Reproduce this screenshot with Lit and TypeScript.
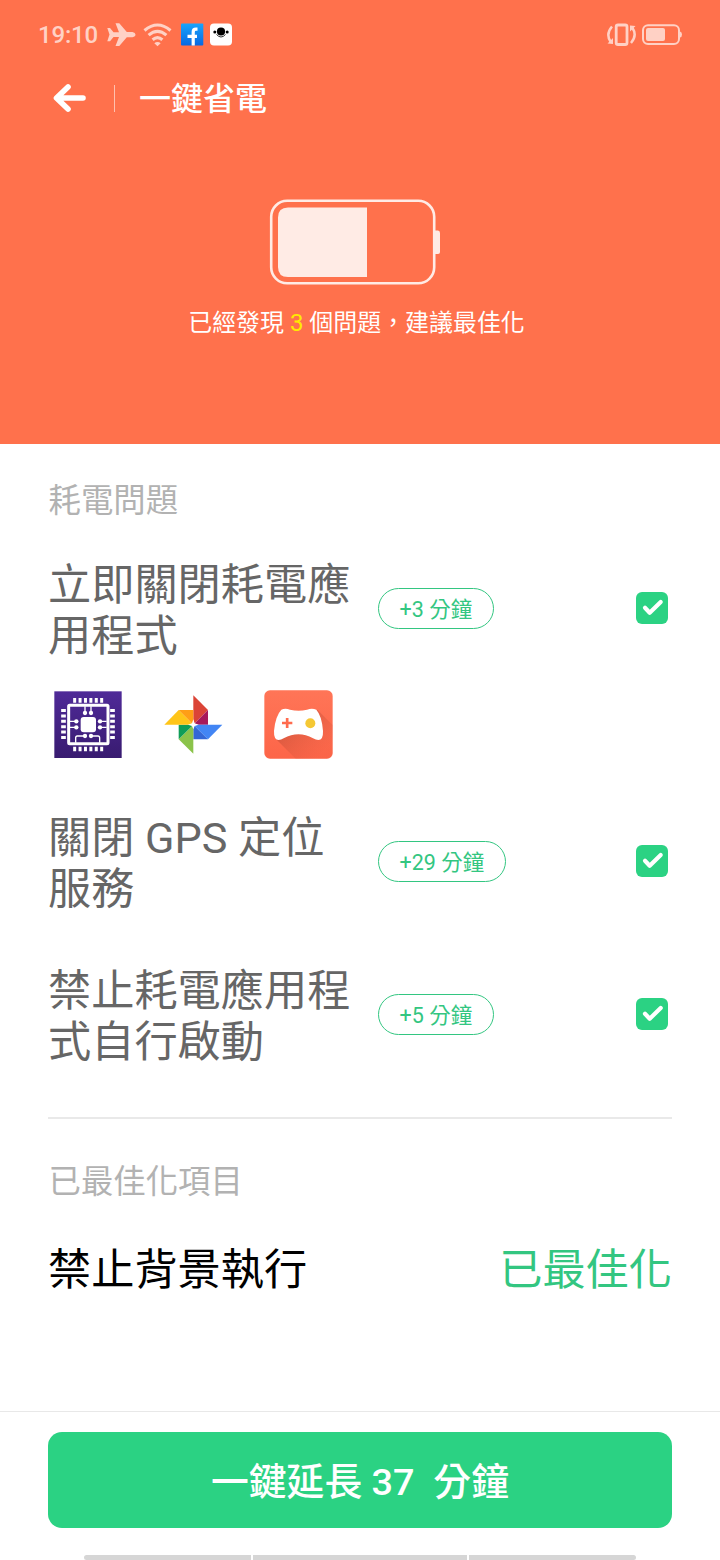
import { LitElement, html, css, svg } from "lit";
import { customElement, property, state } from "lit/decorators.js";

const processor = html`<svg viewBox="42 30 207 207" aria-hidden="true">
  <defs><linearGradient id="cpu" x1="0" y1="0" x2="0" y2="1"><stop offset="0" stop-color="#4f2a98" /><stop offset="1" stop-color="#381b70" /></linearGradient></defs>
  <rect x="43" y="34" width="202" height="200" fill="url(#cpu)" />
  <g stroke="#fff" fill="none">
    <rect x="86" y="76" width="118" height="115" rx="3" stroke-width="9" />
    <path stroke-width="14" stroke-dasharray="9 7.2" d="M99.500 61H190M99.500 207H190M70.500 87V178M217.500 87V178" />
    <path stroke-width="4" d="M135 79V98M153 79V98M90 124H110M90 142H110M180 124H200M180 142H200M135 168H112Q107 168 107 174V188M153 168H174Q179 168 179 174V188" />
  </g>
  <g fill="#fff">
    <rect x="122" y="111" width="46" height="46" rx="9" />
    ${[[135, 99], [153, 99], [109, 124], [109, 142], [180, 124], [180, 142], [135, 168], [153, 168]].map(
      ([x, y]) => svg`<circle cx=${x} cy=${y} r="6.5" />`
    )}
  </g>
</svg>`;

const pinwheel = html`<svg viewBox="357 30 207 207" aria-hidden="true">
  <path fill="#db4437" d="M460 46L504 90L460 134Z" />
  <path fill="#a7195b" d="M504 90V134H460Z" />
  <path fill="#4285f4" d="M460 134H547L504 178Z" />
  <path fill="#3367d6" d="M460 134L504 178H460Z" />
  <path fill="#8bc34a" d="M460 134V221L416 178Z" />
  <path fill="#0f9d58" d="M416 134H460L416 178Z" />
  <path fill="#ffc518" d="M373 134L416 90L460 134Z" />
  <path fill="#ff9e16" d="M416 90H460V134Z" />
  <path fill="#fff" d="M460 118L464 130L476 134L464 138L460 148L456 138L444 134L456 130Z" />
</svg>`;

const gamepad = html`<svg viewBox="672 30 207 207" aria-hidden="true">
  <defs>
    <linearGradient id="pad" x1="0" y1="0" x2="0" y2="1"><stop offset="0" stop-color="#ff7557" /><stop offset="1" stop-color="#fd6548" /></linearGradient>
    <linearGradient id="shade" x1="0" y1="0" x2="1" y2="1"><stop offset=".25" stop-color="#b84a34" stop-opacity=".55" /><stop offset=".85" stop-color="#e05a40" stop-opacity=".1" /></linearGradient>
  </defs>
  <rect x="673" y="31" width="205" height="205" rx="17" fill="url(#pad)" />
  <path fill="url(#shade)" d="M707 176L767 236H862Q878 236 878 220V135L832 89L770 130Z" />
  <path fill="#fff" d="M724 89Q736 84 750 89Q776 95 801 89Q816 84 829 89Q846 108 849 153Q850 180 835 180Q828 180 819 175Q776 151 731 175Q723 180 716 180Q701 180 702 153Q706 108 724 89Z" />
  <path stroke="#ff6b4e" stroke-width="8" d="M726 129H757M741.500 114V144" />
  <circle cx="811" cy="130" r="15" fill="#f5c834" />
</svg>`;

interface Issue {
  title: string;
  minutes: number;
  apps?: unknown[];
}

@customElement("check-mark")
class CheckMark extends LitElement {
  static styles = css`
    :host { display: block; width: 32px; height: 32px; }
    svg { display: block; }
  `;
  @property({ type: Boolean }) on = true;
  render() {
    return html`<svg width="32" height="32" viewBox="0 0 32 32">
      <rect width="32" height="32" rx="6" fill=${this.on ? "#2bd283" : "#ccc"} />
      <path d="M9 15.800L13.700 20.700L24.700 10" fill="none" stroke="#fff" stroke-width="4.200" stroke-linecap="round" stroke-linejoin="round" />
    </svg>`;
  }
}

@customElement("status-bar")
class StatusBar extends LitElement {
  static styles = css`
    :host { display: flex; height: 70px; box-sizing: border-box; padding: 0 38px; align-items: center; color: #ffd1c5; }
    .time { font-size: 24px; font-weight: 500; letter-spacing: -0.2px; width: 68px; }
    svg { display: block; }
    .fill { flex: 1; }
  `;
  render() {
    return html`
      <span class="time">19:10</span>
      <svg width="126" height="30" viewBox="106 20 126 30">
        <path fill="#ffd1c5" d="M107.300 28H110L113.500 32.300H119L115.500 23.300H119.300L126.800 32H132.500Q135.500 32.600 135.500 34.600Q135.500 36.700 132.500 37.300H126.800L119.300 46H115.500L119 37H113.500L110 41.200H107.300L109.500 34.600Z" />
        <g fill="none" stroke="#ffd1c5" stroke-width="3.100">
          <path d="M144.500 30.500Q157.500 19.500 170.500 30.500M148.600 35.200Q157.500 27.500 166.400 35.200M152.600 39.800Q157.500 35.600 162.400 39.800" />
        </g>
        <path fill="#ffd1c5" d="M154.300 43.300Q157.500 40.500 160.700 43.300L157.500 46.200Z" />
        <defs><linearGradient id="fb" x1="0" y1="0" x2="0" y2="1"><stop offset="0" stop-color="#19a4fb" /><stop offset="1" stop-color="#0768e3" /></linearGradient></defs>
        <rect x="181" y="23.500" width="22.300" height="22" rx="1" fill="url(#fb)" />
        <path d="M197.500 29.200H196Q193.200 29.200 193.200 32V45.500M187.500 36.300H197" stroke="#fff" stroke-width="3.200" fill="none" />
        <rect x="210" y="23.500" width="22" height="22" rx="4" fill="#fff" />
        <circle cx="221" cy="31.500" r="4.100" fill="#000" />
        <circle cx="214.800" cy="32" r="1.500" fill="#000" />
        <circle cx="227.200" cy="32" r="1.500" fill="#000" />
        <path d="M216.500 34.500Q221 39.500 225.500 34.500" stroke="#333" fill="none" stroke-width="1" />
      </svg>
      <span class="fill"></span>
      <svg width="76" height="30" viewBox="606 20 76 30">
        <g fill="none" stroke="#ffd1c5">
          <rect x="616.200" y="25" width="10.800" height="19.500" rx="1.800" stroke-width="2.800" />
          <path d="M612 26.500Q605.500 34 610.500 41.500M631 43Q637.500 35.500 632.500 28" stroke-width="2.500" />
          <rect x="643" y="25.200" width="36" height="18.800" rx="5" stroke-width="2" />
        </g>
        <path fill="#ffd1c5" d="M607.500 43.500L613 44V38ZM635.500 26L630 25.500V31.500Z" />
        <rect x="646" y="28" width="19" height="13" rx="2" fill="#ffd1c5" />
        <path d="M680 31.500Q682 32 682 34.500Q682 37 680 37.500Z" fill="#ffd1c5" />
      </svg>
    `;
  }
}

@customElement("issue-row")
class IssueRow extends LitElement {
  static styles = css`
    :host { display: block; }
    .row { display: grid; grid-template-columns: 330px 1fr 32px; align-items: center; height: 102px; padding-right: 4px; }
    .title { font-size: 43.2px; line-height: 51px; color: #666; width: 310px; margin: 3px 0 -3px; }
    .pill { justify-self: start; box-sizing: border-box; height: 41px; padding: 1px 20.500px 0; border: 1.5px solid #33c681; border-radius: 21px; color: #33c681; font-size: 21.500px; line-height: 40px; white-space: nowrap; }
    .apps { display: flex; gap: 36px; padding: 31px 0 0 6px; }
    .apps svg { display: block; width: 69px; height: 69px; }
  `;
  @property({ attribute: false }) issue!: Issue;
  render() {
    const { title, minutes, apps } = this.issue;
    return html`
      <div class="row">
        <div class="title">${title}</div>
        <div class="pill">+${minutes} 分鐘</div>
        <check-mark></check-mark>
      </div>
      ${apps ? html`<div class="apps">${apps}</div>` : ""}
    `;
  }
}

@customElement("app-root")
class AppRoot extends LitElement {
  static styles = css`
    :host { display: flex; flex-direction: column; width: 720px; height: 1560px; overflow: hidden; background: #fff; font-family: Roboto, "Noto Sans CJK TC", sans-serif; }
    .hero { height: 444px; background: #ff714c; color: #fff; }
    .toolbar { display: flex; align-items: center; height: 56px; padding-left: 52px; }
    .toolbar svg { display: block; }
    .rule { width: 1px; height: 27px; background: #ffc0ae; margin: 0 24px 0 27px; }
    .name { font-size: 32px; line-height: 48px; font-weight: 500; padding-top: 2px; }
    .battery { display: block; margin: 73px 0 0 269px; }
    .message { margin-top: 19px; padding-right: 7px; text-align: center; font-size: 23.950px; line-height: 36px; }
    .count { color: #ffea00; }
    .content { flex: 1; padding: 0 48px; }
    .heading { font-size: 32.400px; line-height: 48px; color: #b2b2b2; padding-left: 0.500px; }
    .open { padding-top: 33px; }
    .issues { display: flex; flex-direction: column; gap: 51px; padding-top: 32px; }
    .done { margin-top: 52px; border-top: 2px solid #e9e9e9; padding-top: 39px; }
    .result { display: flex; justify-content: space-between; padding-top: 32px; font-size: 43.200px; line-height: 65px; color: #000; }
    .ok { color: #33c681; }
    .footer { box-sizing: border-box; height: 149px; border-top: 1px solid #e8e8e8; padding: 20px 48px 0; }
    .action { display: block; width: 100%; height: 96px; border: 0; border-radius: 14px; background: #2bd283; color: #fff; font: 500 37.800px/96px Roboto, "Noto Sans CJK TC", sans-serif; white-space: pre; padding: 2px 0 0; }
    .nav { display: flex; gap: 2px; margin: 27px 36px 0; height: 5px; border-radius: 3px; overflow: hidden; }
    .nav span { flex: 167; background: #d6d6d6; }
    .nav .mid { flex: 214; }
  `;

  @state() private issues: Issue[] = [
    { title: "立即關閉耗電應用程式", minutes: 3, apps: [processor, pinwheel, gamepad] },
    { title: "關閉 GPS 定位服務", minutes: 29 },
    { title: "禁止耗電應用程式自行啟動", minutes: 5 },
  ];

  render() {
    const total = this.issues.reduce((sum, i) => sum + i.minutes, 0);
    return html`
      <header class="hero">
        <status-bar></status-bar>
        <div class="toolbar">
          <svg width="35" height="30" viewBox="52 83 35 30"><path d="M68 87L56.500 98L68 109M57.500 98H83" fill="none" stroke="#fff" stroke-width="5.600" stroke-linecap="round" stroke-linejoin="round" /></svg>
          <span class="rule"></span>
          <span class="name">一鍵省電</span>
        </div>
        <svg class="battery" width="172" height="87" viewBox="269 199 172 87">
          <rect x="271.200" y="200.800" width="163" height="82.500" rx="16" fill="none" stroke="#ffebe5" stroke-width="2.600" />
          <path d="M367 207.500V277H288Q278 277 278 267V217.500Q278 207.500 288 207.500Z" fill="#ffebe5" />
          <path d="M435 230.500H438Q440 230.500 440 233V252Q440 254 438 254H435Z" fill="#ffebe5" />
        </svg>
        <div class="message">已經發現 <span class="count">${this.issues.length}</span> 個問題，建議最佳化</div>
      </header>
      <main class="content">
        <div class="heading open">耗電問題</div>
        <div class="issues">${this.issues.map((issue) => html`<issue-row .issue=${issue}></issue-row>`)}</div>
        <section class="done">
          <div class="heading">已最佳化項目</div>
          <div class="result"><span>禁止背景執行</span><span class="ok">已最佳化</span></div>
        </section>
      </main>
      <footer class="footer">
        <button class="action">一鍵延長 ${total}  分鐘</button>
        <div class="nav"><span></span><span class="mid"></span><span></span></div>
      </footer>
    `;
  }
}
